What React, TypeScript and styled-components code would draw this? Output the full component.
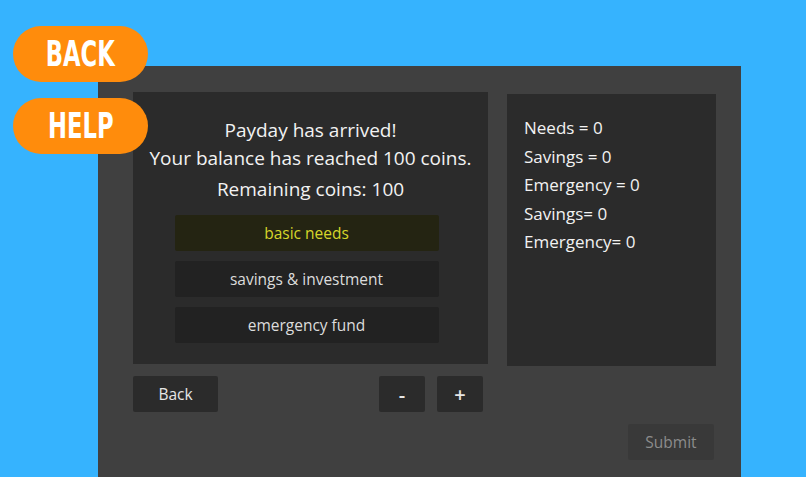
import React from "react";
import styled, { createGlobalStyle } from "styled-components";

const Global = createGlobalStyle`
  html, body { margin: 0; padding: 0; }
  body {
    background: #36b3fe;
    font-family: "Open Sans", "Noto Sans", sans-serif;
    width: 806px;
    height: 477px;
    overflow: hidden;
  }
`;

const Page = styled.div`
  position: relative;
  width: 806px;
  height: 477px;
  padding: 66px 0 0 98px;
  box-sizing: border-box;
`;

const Panel = styled.div`
  width: 643px;
  height: 411px;
  background: #404040;
  box-sizing: border-box;
  padding: 26px 25px 0 35px;
  display: flex;
  flex-direction: column;
`;

const Cards = styled.div`
  display: flex;
  gap: 19px;
  align-items: flex-start;
`;

const LeftCard = styled.div`
  width: 355px;
  height: 272px;
  background: #2b2b2b;
  box-sizing: border-box;
  padding: 24px 0 0 0;
  display: flex;
  flex-direction: column;
  align-items: center;
  color: #f2f2f2;
`;

const Message = styled.div`
  font-size: 19px;
  font-weight: 500;
  line-height: 28px;
  text-align: center;
`;

const Remaining = styled.div`
  font-size: 19px;
  font-weight: 500;
  line-height: 28px;
  margin-top: 3px;
  margin-bottom: 12px;
`;

const Choices = styled.div`
  display: flex;
  flex-direction: column;
  gap: 10px;
  margin-right: 8px;
`;

const Choice = styled.div<{ $active?: boolean }>`
  width: 264px;
  height: 36px;
  border-radius: 2px;
  background: ${(p) => (p.$active ? "#242412" : "#222222")};
  color: ${(p) => (p.$active ? "#d6d62a" : "#dcdcdc")};
  font-size: 15.5px;
  font-weight: 500;
  display: flex;
  align-items: center;
  justify-content: center;
`;

const RightCard = styled.div`
  width: 209px;
  height: 272px;
  margin-top: 2px;
  background: #2b2b2b;
  box-sizing: border-box;
  padding: 20px 17px;
  color: #f2f2f2;
`;

const Stat = styled.div`
  font-size: 17px;
  font-weight: 500;
  line-height: 28.5px;
`;

const Controls = styled.div`
  display: flex;
  margin-top: 10px;
  height: 36px;
`;

const Btn = styled.div<{ $w: number }>`
  width: ${(p) => p.$w}px;
  height: 36px;
  background: #2b2b2b;
  border-radius: 2px;
  color: #e6e6e6;
  font-size: 15.5px;
  font-weight: 500;
  display: flex;
  align-items: center;
  justify-content: center;
`;

const PlusMinus = styled(Btn)`
  font-size: 20px;
  font-weight: 600;
`;

const Spacer = styled.div`
  flex: 0 0 161px;
`;

const Gap = styled.div`
  flex: 0 0 12px;
`;

const SubmitRow = styled.div`
  display: flex;
  justify-content: flex-end;
  margin-top: 12px;
  padding-right: 2px;
`;

const Submit = styled.div`
  width: 86px;
  height: 36px;
  background: #393939;
  border-radius: 2px;
  color: #8c8c8c;
  font-size: 15.5px;
  font-weight: 500;
  display: flex;
  align-items: center;
  justify-content: center;
`;

const Pills = styled.div`
  position: absolute;
  left: 13px;
  top: 26px;
  display: flex;
  flex-direction: column;
  gap: 16px;
`;

const Pill = styled.div`
  width: 135px;
  height: 56px;
  border-radius: 28px;
  background: #ff8c0c;
  color: #ffffff;
  font-family: "DejaVu Sans Condensed", "DejaVu Sans", sans-serif;
  font-weight: bold;
  font-size: 36px;
  display: flex;
  align-items: center;
  justify-content: center;
  box-sizing: border-box;
  span { display: inline-block; transform: scaleX(0.7); line-height: 1; }
`;

export default function App() {
  return (
    <>
      <Global />
      <Page>
        <Panel>
          <Cards>
            <LeftCard>
              <Message>
                Payday has arrived!
                <br />
                Your balance has reached 100 coins.
              </Message>
              <Remaining>Remaining coins: 100</Remaining>
              <Choices>
                <Choice $active>basic needs</Choice>
                <Choice>savings &amp; investment</Choice>
                <Choice>emergency fund</Choice>
              </Choices>
            </LeftCard>
            <RightCard>
              <Stat>Needs = 0</Stat>
              <Stat>Savings = 0</Stat>
              <Stat>Emergency = 0</Stat>
              <Stat>Savings= 0</Stat>
              <Stat>Emergency= 0</Stat>
            </RightCard>
          </Cards>
          <Controls>
            <Btn $w={85}>Back</Btn>
            <Spacer />
            <PlusMinus $w={46}>-</PlusMinus>
            <Gap />
            <PlusMinus $w={46}>+</PlusMinus>
          </Controls>
          <SubmitRow>
            <Submit>Submit</Submit>
          </SubmitRow>
        </Panel>
        <Pills>
          <Pill><span>BACK</span></Pill>
          <Pill><span>HELP</span></Pill>
        </Pills>
      </Page>
    </>
  );
}
